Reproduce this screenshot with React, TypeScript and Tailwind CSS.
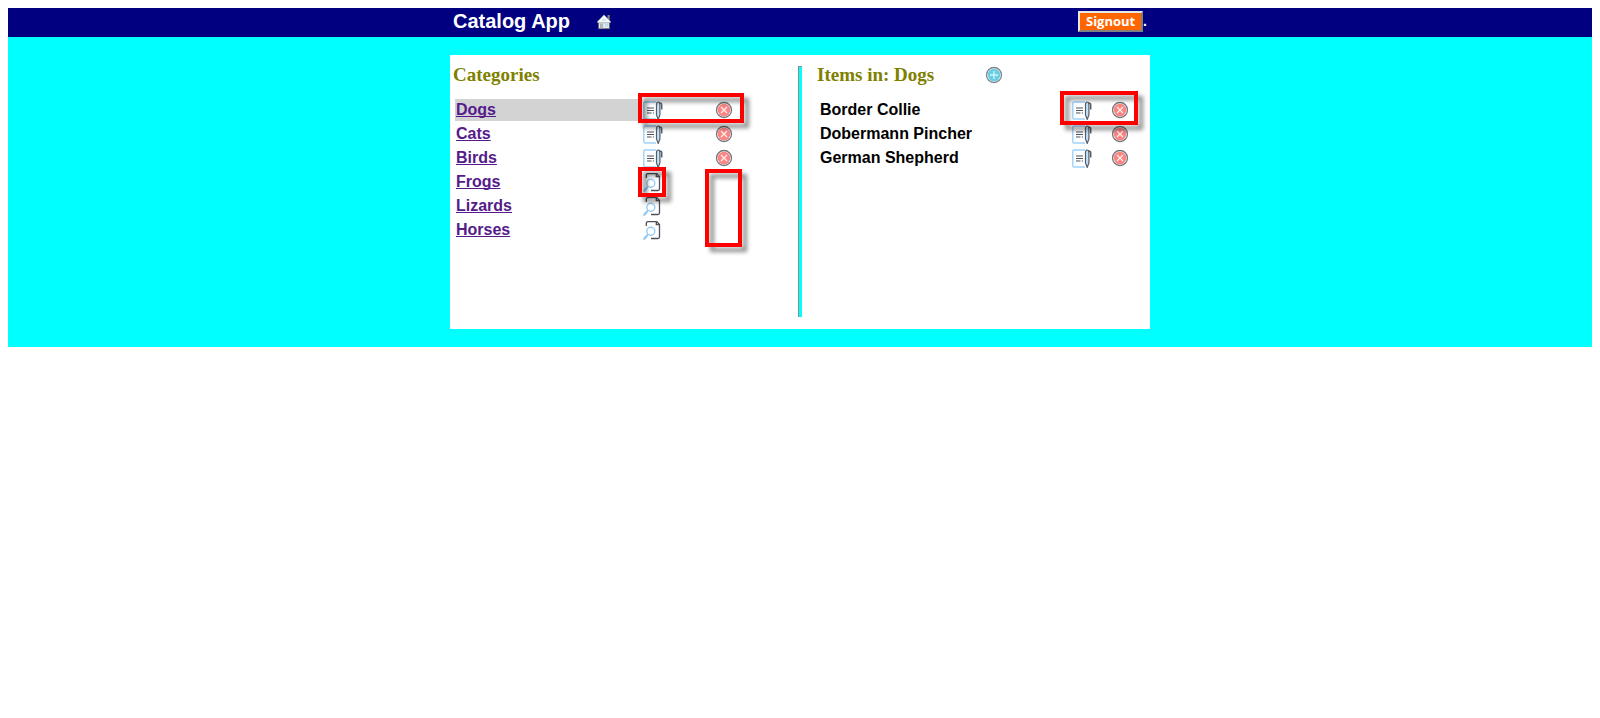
import React from "react";

function HomeIcon() {
  return (
    <svg viewBox="0 0 16 16" className="size-4" aria-hidden="true">
      <path d="M11.5 1h2.2v6h-2.2z" fill="#7d8480" />
      <path d="M2.5 7.5h11v7.2h-11z" fill="#e6eaea" stroke="#5d645f" strokeWidth=".7" />
      <path d="M8 .8 15 8l-1 .8H2L1 8z" fill="#f4f7f7" stroke="#7e8b90" strokeWidth=".6" />
      <path d="M4 9.5h3v5H4z" fill="#aeb6bc" />
      <path d="M9 9h3.5v3.5H9z" fill="#c5d9e6" />
      <path d="M6.5 5h3v2h-3z" fill="#d3e0ea" />
    </svg>
  );
}

function EditIcon() {
  return (
    <svg viewBox="0 0 20 20" className="block h-5 w-5" fill="none" aria-hidden="true">
      <path d="M13 2H2Q.8 2 .8 3.3v14.200q0 1.500 1.200 1.500h11" stroke="#9dd1fb" strokeWidth="1.4" />
      <path d="M4 8h7M4 10.500h7M4 13h4.500M9.800 13H11" stroke="#4d535d" strokeWidth="1.1" />
      <path d="M13.500 5q0-3 1.700-3t1.700 3v10l-1.700 4.500-1.700-4.500z" fill="#c5e3fa" stroke="#555d68" strokeWidth="1.2" />
      <path d="M16 3h.8q1.900 0 1.900 2v4.500" stroke="#555d68" strokeWidth="1.5" />
    </svg>
  );
}

function ViewIcon() {
  return (
    <svg viewBox="0 0 20 20" className="block h-5 w-5" fill="none" aria-hidden="true">
      <path d="M3.300 6V3.500q0-1.800 1.500-1.800h9l2.700 2.800V17q0 1.500-1.500 1.500H8M13.300 2v2.700h3" stroke="#4d535d" strokeWidth="1.3" />
      <circle cx="7.800" cy="11.200" r="4" stroke="#93cbf8" strokeWidth="1.4" />
      <path d="m4.900 14.200-1 1.200" stroke="#93cbf8" strokeWidth="1.2" />
      <path d="m3.900 15.800-2.600 2.900" stroke="#93cbf8" strokeWidth="2.4" strokeLinecap="round" />
    </svg>
  );
}

function DeleteIcon() {
  return (
    <svg viewBox="0 0 18 18" className="block size-[18px]" fill="none" aria-hidden="true">
      <circle cx="9" cy="9" r="7.5" fill="#fff" stroke="#72767c" strokeWidth="1.3" />
      <circle cx="9" cy="9" r="6.3" fill="#fa8583" />
      <path d="m6 6 6 6m0-6-6 6" stroke="#fff1ef" strokeWidth="1.2" />
    </svg>
  );
}

function AddIcon() {
  return (
    <svg viewBox="0 0 18 18" className="block size-[18px]" fill="none" aria-hidden="true">
      <circle cx="9" cy="9" r="7.5" fill="#fff" stroke="#7f858d" strokeWidth="1.3" />
      <circle cx="9" cy="9" r="6.3" fill="#68cfe2" />
      <path d="M9 5v8M5 9h8" stroke="#d5f5fa" strokeWidth="1.3" />
    </svg>
  );
}

const categories = [
  { name: "Dogs", owned: true, selected: true },
  { name: "Cats", owned: true, selected: false },
  { name: "Birds", owned: true, selected: false },
  { name: "Frogs", owned: false, selected: false },
  { name: "Lizards", owned: false, selected: false },
  { name: "Horses", owned: false, selected: false },
];

const items = ["Border Collie", "Dobermann Pincher", "German Shepherd"];

const table = "table-fixed border-separate border-spacing-[2px] text-left text-[16px] leading-[22px] font-bold";
const heading = "font-['Liberation_Serif',serif] text-[19px] leading-[17px] font-bold text-[#808000]";
const highlight = "pointer-events-none absolute border-4 border-[#ff0000] drop-shadow-[5px_5px_2px_rgba(0,0,0,0.45)]";

export default function App() {
  return (
    <div className="bg-white p-2 font-['Liberation_Sans',sans-serif] text-black">
      <header className="bg-[#000080]">
        <div className="mx-auto flex h-[29px] w-[700px] max-w-full items-center justify-between px-[3px] pb-[2px] text-white">
          <div className="flex items-center gap-[26px]">
            <h1 className="text-[20px] leading-[27px] font-bold">Catalog App</h1>
            <a href="#home" aria-label="Home">
              <HomeIcon />
            </a>
          </div>
          <div className="flex items-center font-bold">
            <button
              type="button"
              className="h-[21px] w-[65px] border-2 border-t-[#e8e8e8] border-r-[#808080] border-b-[#808080] border-l-[#e8e8e8] bg-[#ff6600] font-['Open_Sans',sans-serif] text-[13px] leading-[17px] font-bold"
            >
              Signout
            </button>
            <span className="text-[14px]">.</span>
          </div>
        </div>
      </header>
      <main className="bg-[#00ffff] py-[18px]">
        <div className="relative mx-auto flex w-[700px] max-w-full bg-white pt-[11px] pb-3">
          <section className="w-[348px] pl-[3px]">
            <h2 className={`${heading} mb-[14px]`}>Categories</h2>
            <table className={table}>
              <colgroup>
                <col className="w-[185px]" />
                <col className="w-[70px]" />
                <col className="w-[70px]" />
              </colgroup>
              <tbody>
                {categories.map((c) => (
                  <tr key={c.name}>
                    <td className={c.selected ? "bg-[#d3d3d3] px-px py-0" : "px-px py-0"}>
                      <a href={"#" + c.name} className="text-[#551a8b] underline decoration-1 [text-decoration-skip-ink:none]">
                        {c.name}
                      </a>
                    </td>
                    <td className="px-px py-0">
                      <a href={"#open-" + c.name} aria-label={(c.owned ? "Edit " : "View ") + c.name} className="block w-5">
                        {c.owned ? <EditIcon /> : <ViewIcon />}
                      </a>
                    </td>
                    <td className="px-px py-0">
                      {c.owned && (
                        <a href={"#delete-" + c.name} aria-label={"Delete " + c.name} className="block w-[18px]">
                          <DeleteIcon />
                        </a>
                      )}
                    </td>
                  </tr>
                ))}
              </tbody>
            </table>
          </section>
          <div className="h-[251px] w-1 border-t border-l border-[#8c8c8c] bg-[#00ffff]" />
          <section className="flex-1 pl-[15px]">
            <div className="mb-[14px] flex h-[17px] items-center">
              <h2 className={`${heading} w-[168px]`}>Items in: Dogs</h2>
              <a href="#add" aria-label="Add item">
                <AddIcon />
              </a>
            </div>
            <table className={table}>
              <colgroup>
                <col className="w-[250px]" />
                <col className="w-[37px]" />
                <col className="w-[30px]" />
              </colgroup>
              <tbody>
                {items.map((name) => (
                  <tr key={name}>
                    <td className="px-px py-0">{name}</td>
                    <td className="px-px py-0">
                      <a href={"#edit-" + name} aria-label={"Edit " + name} className="block w-5">
                        <EditIcon />
                      </a>
                    </td>
                    <td className="px-px py-0">
                      <a href={"#delete-" + name} aria-label={"Delete " + name} className="block w-[18px]">
                        <DeleteIcon />
                      </a>
                    </td>
                  </tr>
                ))}
              </tbody>
            </table>
          </section>
          <div className={`${highlight} top-[38px] left-[188px] h-[30px] w-[106px]`} />
          <div className={`${highlight} top-[112px] left-[188px] h-[30px] w-[28px]`} />
          <div className={`${highlight} top-[114px] left-[255px] h-[78px] w-[37px]`} />
          <div className={`${highlight} top-[36px] left-[610px] h-[34px] w-[78px]`} />
        </div>
      </main>
    </div>
  );
}
